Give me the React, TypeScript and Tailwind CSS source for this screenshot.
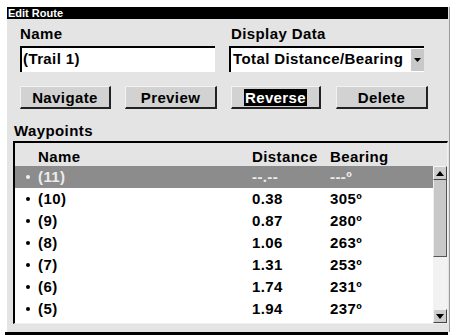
import React from "react";

const rows = [
  { name: "(11)", dist: "--.--", bearing: "---º", selected: true },
  { name: "(10)", dist: "0.38", bearing: "305º" },
  { name: "(9)", dist: "0.87", bearing: "280º" },
  { name: "(8)", dist: "1.06", bearing: "263º" },
  { name: "(7)", dist: "1.31", bearing: "253º" },
  { name: "(6)", dist: "1.74", bearing: "231º" },
  { name: "(5)", dist: "1.94", bearing: "237º" },
];

function Button({ label, focused }: { label: string; focused?: boolean }) {
  return (
    <div className="h-[23px] flex items-center justify-center bg-[#d2d2d2] border-t border-l border-t-[#f2f2f2] border-l-[#f2f2f2] border-r-2 border-b-2 border-r-[#222] border-b-[#222]">
      <span className={focused ? "bg-black text-white px-[1px] leading-[17px]" : "leading-[17px]"}>
        {label}
      </span>
    </div>
  );
}

function Arrow({ up }: { up?: boolean }) {
  return (
    <div className="w-[14px] h-[14px] flex items-center justify-center bg-[#cdcdcd] border-t border-l border-t-[#f4f4f4] border-l-[#f4f4f4] border-r border-b border-r-[#444] border-b-[#444]">
      <svg width="8" height="5" viewBox="0 0 8 5">
        {up ? <polygon points="0,5 8,5 4,0" fill="#000" /> : <polygon points="0,0 8,0 4,5" fill="#000" />}
      </svg>
    </div>
  );
}

export default function App() {
  return (
    <div
      className="w-[456px] h-[335px] bg-white overflow-hidden text-[15px] font-bold tracking-[0.4px] text-black"
      style={{ fontFamily: '"Liberation Sans", Arial, sans-serif' }}
    >
      <div className="ml-[7px] mt-[7px] w-[443px] h-[325px] bg-[#e4e4e4] border-r border-r-[#9a9a9a] flex flex-col">
        {/* title bar */}
        <div className="h-[12px] w-[441px] bg-black text-white text-[11px] leading-[12px] pl-[1px] tracking-normal">
          Edit Route
        </div>

        {/* name + display data */}
        <div className="flex">
          <div className="ml-[13px] w-[195px]">
            <div className="h-[27px] pt-[6px] leading-[18px]">Name</div>
            <div className="h-[26px] bg-white border-t-2 border-l-2 border-black pl-[1px] leading-[22px]">
              (Trail 1)
            </div>
          </div>
          <div className="ml-[14px] w-[195px]">
            <div className="h-[27px] pt-[6px] pl-[2px] leading-[18px]">Display Data</div>
            <div className="h-[26px] bg-white border-t-2 border-l-2 border-black flex">
              <span className="flex-1 pl-[2px] leading-[22px] whitespace-nowrap overflow-hidden">
                Total Distance/Bearing
              </span>
              <div className="w-[13px] h-[22px] mt-[1px] bg-[#c8c8c8] flex items-center justify-center">
                <svg width="7" height="4" viewBox="0 0 7 4">
                  <polygon points="0,0 7,0 3.5,4" fill="#000" />
                </svg>
              </div>
            </div>
          </div>
        </div>

        {/* buttons */}
        <div className="flex mt-[14px] ml-[13px]">
          <div className="w-[91px]"><Button label="Navigate" /></div>
          <div className="w-[92px] ml-[14px]"><Button label="Preview" /></div>
          <div className="w-[90px] ml-[14px]"><Button label="Reverse" focused /></div>
          <div className="w-[92px] ml-[15px]"><Button label="Delete" /></div>
        </div>

        {/* waypoints */}
        <div className="h-[32px] pt-[13px] pl-[7px] leading-[18px]">Waypoints</div>
        <div className="ml-[6px] w-[435px] h-[183px] border-t-2 border-l-2 border-black border-r border-b border-r-[#f0f0f0] border-b-[#f0f0f0] flex flex-col">
          <div className="h-[23px] shrink-0 flex pt-[5px] leading-[18px]">
            <span className="ml-[23px] w-[214px]">Name</span>
            <span className="w-[78px]">Distance</span>
            <span>Bearing</span>
          </div>
          <div className="flex flex-1">
            <div className="flex-1 bg-white">
              {rows.map((r) => (
                <div
                  key={r.name}
                  className={
                    "h-[22px] flex items-center leading-[22px] " +
                    (r.selected ? "bg-[#8c8c8c] text-[#ececec]" : "")
                  }
                >
                  <span className="w-[23px] flex justify-end pr-[8px]">
                    <span className={"w-[4px] h-[4px] rounded-full " + (r.selected ? "bg-[#f0f0f0]" : "bg-black")} />
                  </span>
                  <span className="w-[214px]">{r.name}</span>
                  <span className="w-[78px]">{r.dist}</span>
                  <span>{r.bearing}</span>
                </div>
              ))}
            </div>
            <div className="w-[14px] flex flex-col bg-[#f2f2f2]">
              <Arrow up />
              <div className="h-[77px] bg-[#c8c8c8] border-r border-b border-r-[#555] border-b-[#555] border-l border-l-[#eee]" />
              <div className="flex-1" />
              <Arrow />
            </div>
          </div>
        </div>
      </div>
      <div className="ml-[5px] w-[443px] h-[3px] bg-black" />
    </div>
  );
}
